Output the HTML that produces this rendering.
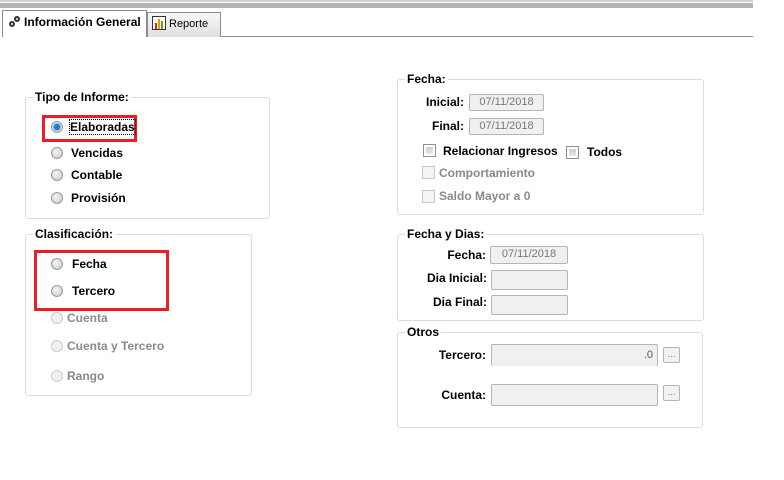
<!DOCTYPE html>
<html><head><meta charset="utf-8"><style>
*{margin:0;padding:0;box-sizing:border-box}
body{width:784px;height:480px;background:#fff;position:relative;overflow:hidden;font-family:"Liberation Sans",sans-serif;font-size:12px;font-weight:bold;color:#000}
.a{position:absolute}
.g{position:absolute;border:1px solid #d5dfe5;border-radius:3px}
.lg{position:absolute;background:#fff;padding:0 2px;line-height:13px}
.r{position:absolute;width:12px;height:12px;border-radius:50%;border:1px solid #9a9a9a;background:radial-gradient(circle at 40% 35%,#f4f4f4,#c8c8c8)}
.r.d{border-color:#ccc;background:#f0f0f0}
.t{position:absolute;line-height:14px}
.gr{color:#8a8a8a}
.in{position:absolute;border:1px solid #b5b5b5;border-radius:2px;background:#f0f0f0;font-weight:normal;color:#777;font-size:11px;text-align:center;line-height:15px}
.cb{position:absolute;width:13px;height:13px;border:1px solid #8e8f8f;background:linear-gradient(#c8c8c8,#eeeeee);box-shadow:inset 0 0 0 2px #fff}
.cb.d{border-color:#c8c8c8;background:#f4f4f4;box-shadow:none}
.red{position:absolute;border:3px solid #ee1c25}
.btn{position:absolute;width:17px;height:16px;border:1px solid #b5b5b5;border-radius:2px;background:#f2f2f2;font-size:9px;font-weight:normal;color:#777;text-align:center;line-height:12px}
</style></head><body>
<div class="a" style="left:0;top:0;width:753px;height:2px;background:#d0d0d0"></div>
<div class="a" style="left:0;top:3px;width:753px;height:5px;background:#b4b4b4"></div>
<div class="a" style="left:146px;top:36px;width:607px;height:1px;background:#898c95"></div>
<div class="a" style="left:147px;top:12px;width:74px;height:25px;border:1px solid #898c95;border-bottom:none;background:linear-gradient(#f8f8f8,#e0e0e0)"></div>
<div class="a" style="left:152px;top:16px;width:14px;height:14px;border:1px solid #333;background:#fff"></div>
<div class="a" style="left:155px;top:23px;width:2px;height:6px;background:#e02020"></div>
<div class="a" style="left:158px;top:19px;width:2px;height:10px;background:#e0a000"></div>
<div class="a" style="left:161px;top:21px;width:2px;height:8px;background:#70a020"></div>
<div class="t" style="left:169px;top:17px;font-weight:normal;font-size:11px">Reporte</div>
<div class="a" style="left:2px;top:10px;width:145px;height:27px;border:1px solid #898c95;border-bottom:none;background:#fff"></div>
<div class="a" style="left:9px;top:21px;width:6px;height:6px;border:2px solid #333;border-radius:50%"></div>
<div class="a" style="left:14px;top:16px;width:6px;height:6px;border:2px solid #333;border-radius:50%"></div>
<div class="t" style="left:24px;top:15px">Información General</div>

<div class="g" style="left:25px;top:97px;width:245px;height:122px"></div>
<div class="lg" style="left:33px;top:91px">Tipo de Informe:</div>
<div class="red" style="left:42px;top:115px;width:95px;height:27px"></div>
<div class="r" style="left:51px;top:121px;background:radial-gradient(circle,#1a6fc0 0,#2b8ad8 3px,#d8d8d8 4px,#fff 6px)"></div>
<div class="t" style="left:70px;top:120px;outline:1px dotted #000">Elaboradas</div>
<div class="r" style="left:51px;top:147px"></div><div class="t" style="left:71px;top:146px">Vencidas</div>
<div class="r" style="left:51px;top:169px"></div><div class="t" style="left:71px;top:168px">Contable</div>
<div class="r" style="left:51px;top:192px"></div><div class="t" style="left:71px;top:191px">Provisión</div>

<div class="g" style="left:25px;top:234px;width:227px;height:162px"></div>
<div class="lg" style="left:33px;top:228px">Clasificación:</div>
<div class="red" style="left:34px;top:250px;width:135px;height:61px"></div>
<div class="r" style="left:51px;top:258px"></div><div class="t" style="left:72px;top:257px">Fecha</div>
<div class="r" style="left:51px;top:285px"></div><div class="t" style="left:72px;top:284px">Tercero</div>
<div class="r d" style="left:51px;top:312px"></div><div class="t gr" style="left:67px;top:311px">Cuenta</div>
<div class="r d" style="left:51px;top:340px"></div><div class="t gr" style="left:67px;top:339px">Cuenta y Tercero</div>
<div class="r d" style="left:51px;top:370px"></div><div class="t gr" style="left:67px;top:369px">Rango</div>

<div class="g" style="left:397px;top:79px;width:307px;height:136px"></div>
<div class="lg" style="left:405px;top:73px">Fecha:</div>
<div class="t" style="left:420px;top:95px;width:44px;text-align:right">Inicial:</div>
<div class="in" style="left:469px;top:94px;width:75px;height:17px">07/11/2018</div>
<div class="t" style="left:420px;top:119px;width:44px;text-align:right">Final:</div>
<div class="in" style="left:469px;top:118px;width:75px;height:17px">07/11/2018</div>
<div class="cb" style="left:423px;top:144px"></div><div class="t" style="left:443px;top:144px">Relacionar Ingresos</div>
<div class="cb" style="left:566px;top:146px"></div><div class="t" style="left:587px;top:145px">Todos</div>
<div class="cb d" style="left:422px;top:166px"></div><div class="t gr" style="left:439px;top:166px">Comportamiento</div>
<div class="cb d" style="left:422px;top:190px"></div><div class="t gr" style="left:439px;top:189px">Saldo Mayor a 0</div>

<div class="g" style="left:397px;top:234px;width:307px;height:87px"></div>
<div class="lg" style="left:405px;top:228px">Fecha y Dias:</div>
<div class="t" style="left:420px;top:248px;width:66px;text-align:right">Fecha:</div>
<div class="in" style="left:490px;top:246px;width:78px;height:18px">07/11/2018</div>
<div class="t" style="left:410px;top:271px;width:77px;text-align:right">Dia Inicial:</div>
<div class="in" style="left:491px;top:270px;width:77px;height:20px"></div>
<div class="t" style="left:410px;top:295px;width:77px;text-align:right">Dia Final:</div>
<div class="in" style="left:491px;top:295px;width:77px;height:20px"></div>

<div class="g" style="left:397px;top:332px;width:306px;height:96px"></div>
<div class="lg" style="left:405px;top:326px">Otros</div>
<div class="t" style="left:420px;top:348px;width:66px;text-align:right">Tercero:</div>
<div class="in" style="left:491px;top:344px;width:167px;height:22px;border-bottom:none;text-align:right;padding-right:4px;line-height:20px;color:#555">.0</div>
<div class="btn" style="left:663px;top:347px">...</div>
<div class="t" style="left:420px;top:388px;width:66px;text-align:right">Cuenta:</div>
<div class="in" style="left:491px;top:384px;width:167px;height:22px"></div>
<div class="btn" style="left:663px;top:385px">...</div>
</body></html>
